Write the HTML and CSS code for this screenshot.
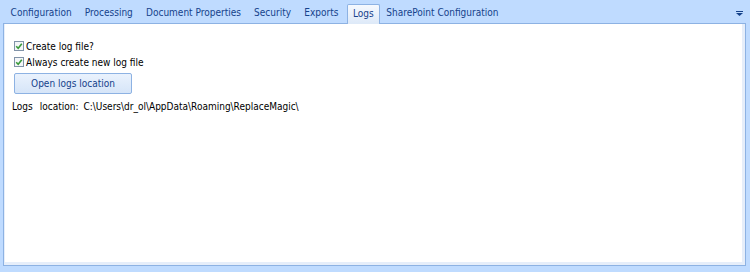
FILE: index.html
```html
<!DOCTYPE html>
<html>
<head>
<meta charset="utf-8">
<link rel="stylesheet" href="styles.css">
</head>
<body>
<div class="window">
  <div class="tabstrip">
    <div class="tabs">
      <div class="tab">Configuration</div>
      <div class="tab">Processing</div>
      <div class="tab">Document Properties</div>
      <div class="tab">Security</div>
      <div class="tab">Exports</div>
      <div class="tab active">Logs</div>
      <div class="tab">SharePoint Configuration</div>
    </div>
    <div class="menu-arrow"><svg width="7" height="5" viewBox="0 0 7 5"><rect x="0" y="0" width="7" height="1" fill="#15428b"/><path d="M0 2 H7 L3.5 5 Z" fill="#15428b"/></svg></div>
  </div>
  <div class="panel">
    <div class="panel-inner">
      <label class="check-row"><span class="checkbox"><svg width="8" height="8" viewBox="0 0 8 8"><path d="M1.2 4.2 L3.2 6.2 L6.8 1.8" fill="none" stroke="#3a9a3a" stroke-width="1.6"/></svg></span>Create log file?</label>
      <label class="check-row"><span class="checkbox"><svg width="8" height="8" viewBox="0 0 8 8"><path d="M1.2 4.2 L3.2 6.2 L6.8 1.8" fill="none" stroke="#3a9a3a" stroke-width="1.6"/></svg></span>Always create new log file</label>
      <button class="btn">Open logs location</button>
      <div class="location"><span class="loc-word">Logs</span><span class="loc-word2">location:</span><span class="loc-path">C:\Users\dr_ol\AppData\Roaming\ReplaceMagic\</span></div>
    </div>
  </div>
</div>
</body>
</html>
```
FILE: styles.css
```css
html, body {
  margin: 0;
  padding: 0;
  background: #bfdbff;
}
body {
  font-family: "DejaVu Sans Condensed", "DejaVu Sans", sans-serif;
  font-stretch: condensed;
  font-size: 10px;
  color: #000;
}
.window {
  width: 750px;
  height: 272px;
  display: flex;
  flex-direction: column;
}
.tabstrip {
  height: 23px;
  display: flex;
  align-items: flex-end;
  padding-left: 4px;
  padding-right: 4px;
}
.tabs {
  display: flex;
  flex: 1;
  align-items: flex-end;
}
.tab {
  height: 19px;
  line-height: 18px;
  padding: 0 6.6px;
  color: #15428b;
  white-space: nowrap;
  box-sizing: border-box;
}
.tab.active {
  background: linear-gradient(#f6f9fe, #dde9f8);
  border: 1px solid #8db2e3;
  border-bottom: none;
  border-radius: 2px 2px 0 0;
  height: 20px;
  padding: 0 5px;
  margin: 0 0 0 2px;
  position: relative;
  top: 1px;
  line-height: 18px;
}
.menu-arrow {
  align-self: center;
  display: flex;
  padding-top: 4px;
  margin-right: 3px;
}
.panel {
  margin: 0 4px 6px 3px;
  flex: 1;
  border: 1px solid #8db2e3;
  background: #fff;
  display: flex;
}
.panel-inner {
  flex: 1;
  border-left: 1px solid #e6eefa;
  border-right: 3px solid #e6eefa;
  border-bottom: 3px solid #e6eefa;
  padding: 16px 0 0 8px;
  display: flex;
  flex-direction: column;
  align-items: flex-start;
}
.check-row {
  display: flex;
  align-items: center;
  height: 12px;
  margin-bottom: 4px;
  margin-left: 1px;
}
.checkbox {
  width: 8px;
  height: 8px;
  border: 1px solid #8193a8;
  background: #f4f6f8;
  display: flex;
  align-items: center;
  justify-content: center;
  margin-right: 2px;
}
.btn {
  font: inherit;
  font-stretch: condensed;
  color: #15428b;
  width: 118px;
  height: 21px;
  margin-top: 1px;
  margin-left: 1px;
  border: 1px solid #8db2e3;
  border-radius: 2px;
  background: linear-gradient(#eaf2fd, #d6e5f8);
  padding: 0;
}
.location {
  margin-top: 7px;
  margin-left: -1px;
  display: flex;
  white-space: nowrap;
}
.loc-word { margin-right: 7px; }
.loc-word2 { margin-right: 5px; }
```
